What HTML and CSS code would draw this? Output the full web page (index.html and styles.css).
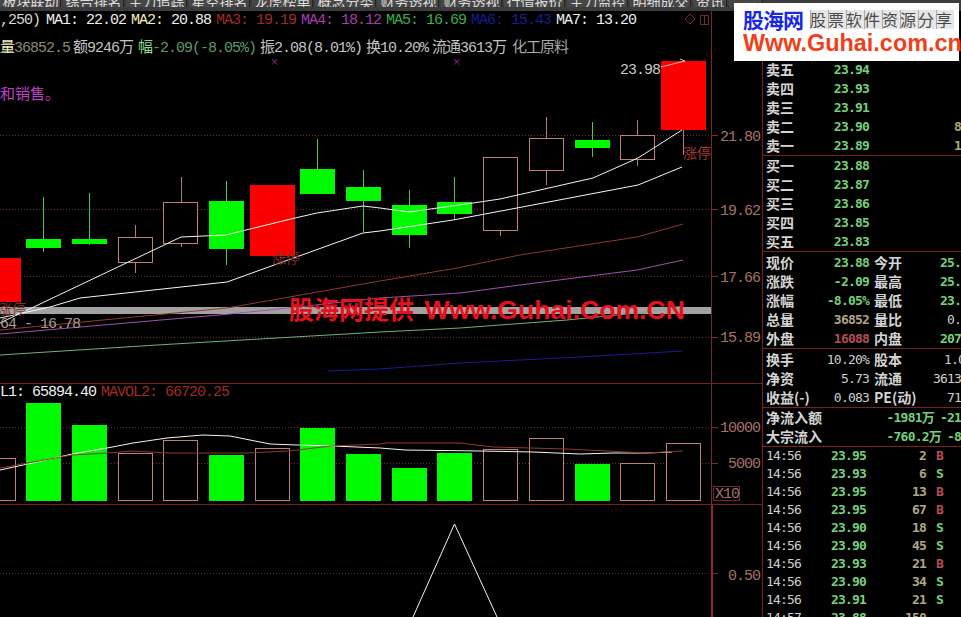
FILE: index.html
```html
<!DOCTYPE html>
<html lang="zh-CN">
  <head>
    <meta charset="UTF-8" />
    <meta name="viewport" content="width=device-width, initial-scale=1.0" />
    <title>股海网</title>
    <link rel="stylesheet" href="styles.css">
  </head>
  <body>
    <nav class="toolbar">
      <a class="tool">板块联动</a>
      <a class="tool">综合排名</a>
      <a class="tool">主力追踪</a>
      <a class="tool">星空排名</a>
      <a class="tool">龙虎榜单</a>
      <a class="tool">概念分类</a>
      <a class="tool">财务透视</a>
      <a class="tool">财务透视</a>
      <a class="tool">行情报价</a>
      <a class="tool">主力监控</a>
      <a class="tool">明细成交</a>
      <a class="tool tool-small">资讯</a>
      <a class="tool tool-small"></a>
    </nav>

    <div class="main">
      <section class="chart">
        <div class="pane pane-price">
          <svg class="plot" viewBox="0 11 762 372" width="762" height="372">
            <rect class="band" x="0" y="307" width="712" height="7" />
            <g class="grid">
              <line x1="0" y1="135.5" x2="712" y2="135.5" />
              <line x1="0" y1="209.5" x2="712" y2="209.5" />
              <line x1="0" y1="276.5" x2="712" y2="276.5" />
              <line x1="0" y1="337.5" x2="712" y2="337.5" />
            </g>
            <path class="axis" d="M711.5 11V383M712 135.5h6M712 209.5h6M712 276.5h6M712 337.5h6" />

            <path class="wick wick-down" d="M43.5 197V252M89.5 193V245M226.5 181V265M317.5 139V169M363.5 170V232M409.5 190V248M454.5 177V220M592.5 122V157" />
            <path class="wick wick-up" d="M135.5 225V237M135.5 262V273M181.5 177V202M181.5 243V247M500.5 230V236M546.5 117V138M546.5 170V185M637.5 120V135M637.5 159V166M683.5 130V155" />

            <rect class="limit" x="0" y="258" width="21" height="44" />
            <rect class="down" x="26" y="239" width="35" height="9" />
            <rect class="down" x="72" y="239" width="35" height="5" />
            <rect class="up" x="118.5" y="237.5" width="34" height="25" />
            <rect class="up" x="163.5" y="202.5" width="34" height="41" />
            <rect class="down" x="209" y="201" width="35" height="48" />
            <rect class="limit" x="250" y="185" width="45" height="71" />
            <rect class="down" x="300" y="169" width="35" height="25" />
            <rect class="down" x="346" y="187" width="35" height="14" />
            <rect class="down" x="392" y="205" width="35" height="30" />
            <rect class="down" x="437" y="202" width="35" height="12" />
            <rect class="up" x="483.5" y="157.5" width="34" height="73" />
            <rect class="up" x="529.5" y="138.5" width="34" height="32" />
            <rect class="down" x="575" y="140" width="35" height="8" />
            <rect class="up" x="620.5" y="135.5" width="34" height="24" />
            <rect class="limit" x="661" y="61" width="45" height="69" />

            <polyline class="ma ma-white" points="0,323 181,237 226,235 250,229 295,218 317,213 363,206 380,208 409,212 473,203 500,199 593,178 638,158 682,130" />
            <polyline class="ma ma-white" points="0,318 50,307 80,298 227,282 363,233 380,231 453,220 517,208 638,185 682,167" />
            <polyline class="ma ma-red" points="0,330 227,308 380,281 457,268 520,255 637,237 683,224" />
            <polyline class="ma ma-purple" points="0,334 230,314 288,308 380,298 460,293 520,285 637,270 683,260" />
            <polyline class="ma ma-green" points="0,355 157,345 380,332 460,328 567,320 647,312 683,306" />
            <polyline class="ma ma-blue" points="328,371 380,369 460,363 580,357 683,351" />

            <polyline class="peak-arrow" points="661,67 685,61 680,59" />
            <text class="mono price-tag" x="620" y="74">23.98</text>
            <text class="mono small-note" x="0" y="328">64 - 16.78</text>
            <text class="flag" x="683" y="158">涨停</text>
            <text class="flag flag-dim" x="272" y="263">涨停</text>
            <text class="flag flag-dim" x="-2" y="314">涨停</text>
            <text class="mark" x="270" y="65">×</text>
            <text class="mark" x="452" y="65">×</text>

            <path class="axis" d="M690 14l5 5-5 5-5-5zM700.5 15.5h8v9h-8zM704.5 15.5v9" />
            <text class="mono axis-label" x="720" y="141">21.80</text>
            <text class="mono axis-label" x="720" y="215">19.62</text>
            <text class="mono axis-label" x="720" y="282">17.66</text>
            <text class="mono axis-label" x="720" y="342">15.89</text>
          </svg>

          <div class="ma-row mono">
            <span class="ma-lead">,250)</span>
            <span class="ma-item c-white">MA1: 22.02</span>
            <span class="ma-item c-white"><b class="c-cream">MA2:</b> 20.88</span>
            <span class="ma-item c-red">MA3: 19.19</span>
            <span class="ma-item c-purple">MA4: 18.12</span>
            <span class="ma-item c-green">MA5: 16.69</span>
            <span class="ma-item c-blue">MA6: 15.43</span>
            <span class="ma-item c-white">MA7: 13.20</span>
          </div>
          <div class="quote-row mono">
            <span class="q-vol"><b class="c-cream">量</b>36852.5</span>
            <span class="c-light">额9246万</span>
            <span class="q-down"><b class="c-mint">幅</b>-2.09(-8.05%)</span>
            <span class="c-light">振2.08(8.01%)</span>
            <span class="c-light">换10.20%</span>
            <span class="c-light">流通3613万</span>
            <span class="q-sector">化工原料</span>
          </div>
          <p class="note">和销售。</p>
          <div class="watermark"><span class="wm-cn">股海网提供</span> Www.Guhai.Com.CN</div>
        </div>

        <div class="pane pane-vol">
          <svg class="plot" viewBox="0 384 762 120" width="762" height="120">
            <g class="grid">
              <line x1="0" y1="427.5" x2="712" y2="427.5" />
              <line x1="0" y1="463.5" x2="712" y2="463.5" />
            </g>
            <path class="axis" d="M711.5 384V504M712 427.5h6M712 463.5h6" />

            <rect class="up" x="-2.5" y="458.5" width="18" height="42" />
            <rect class="down" x="26" y="403" width="35" height="98" />
            <rect class="down" x="72" y="425" width="35" height="76" />
            <rect class="up" x="118.5" y="453.5" width="34" height="47" />
            <rect class="up" x="163.5" y="440.5" width="34" height="60" />
            <rect class="down" x="209" y="455" width="35" height="46" />
            <rect class="up" x="255.5" y="448.5" width="34" height="52" />
            <rect class="down" x="300" y="428" width="35" height="73" />
            <rect class="down" x="346" y="454" width="35" height="47" />
            <rect class="down" x="392" y="468" width="35" height="33" />
            <rect class="down" x="437" y="453" width="35" height="48" />
            <rect class="up" x="483.5" y="449.5" width="34" height="51" />
            <rect class="up" x="529.5" y="438.5" width="34" height="62" />
            <rect class="down" x="575" y="464" width="35" height="37" />
            <rect class="up" x="620.5" y="463.5" width="34" height="37" />
            <rect class="up" x="666.5" y="443.5" width="34" height="57" />

            <polyline class="ma ma-white" points="0,470 37,462 72,454 107,448 133,443 167,438 203,435 230,436 270,444 297,445 333,446 380,448 405,450 480,451 533,452 580,454 613,453 647,453 672,452" />
            <polyline class="ma ma-red" points="0,468 72,455 107,453 133,451 167,453 247,453 290,451 330,446 380,444 387,443 460,443 493,447 567,449 647,453 683,451" />

            <text class="mono axis-label" x="720" y="432">10000</text>
            <text class="mono axis-label" x="728" y="468">5000</text>
            <rect class="scale-box" x="713.5" y="486.5" width="26" height="14" />
            <text class="mono axis-label" x="715" y="498">X10</text>
          </svg>
          <div class="vol-row mono">
            <span class="c-white">L1: 65894.40</span>
            <span class="c-red">MAVOL2: 66720.25</span>
          </div>
        </div>

        <div class="pane pane-extra">
          <svg class="plot" viewBox="0 505 762 112" width="762" height="112">
            <line class="grid-line" x1="0" y1="573.5" x2="712" y2="573.5" />
            <path class="axis axis-strong" d="M712 505V617" />
            <path class="axis" d="M713 573.5h5" />
            <polyline class="ma ma-white" points="413,617 454.5,524 497,617" />
            <text class="mono axis-label" x="728" y="580">0.50</text>
          </svg>
        </div>
      </section>

      <aside class="panel">
        <div class="block block-asks">
          <div class="book-row"><span class="label">卖五</span><span class="num up-num">23.94</span><span></span></div>
          <div class="book-row"><span class="label">卖四</span><span class="num up-num">23.93</span><span></span></div>
          <div class="book-row"><span class="label">卖三</span><span class="num up-num">23.91</span><span></span></div>
          <div class="book-row"><span class="label">卖二</span><span class="num up-num">23.90</span><span class="num tan">8</span></div>
          <div class="book-row"><span class="label">卖一</span><span class="num up-num">23.89</span><span class="num tan">1</span></div>
        </div>
        <div class="block">
          <div class="book-row"><span class="label">买一</span><span class="num up-num">23.88</span><span></span></div>
          <div class="book-row"><span class="label">买二</span><span class="num up-num">23.87</span><span></span></div>
          <div class="book-row"><span class="label">买三</span><span class="num up-num">23.86</span><span></span></div>
          <div class="book-row"><span class="label">买四</span><span class="num up-num">23.85</span><span></span></div>
          <div class="book-row"><span class="label">买五</span><span class="num up-num">23.83</span><span></span></div>
        </div>
        <div class="block block-stats">
          <div class="stat-row"><span class="label">现价</span><span class="num up-num">23.88</span><span class="label">今开</span><span class="num up-num">25.</span></div>
          <div class="stat-row"><span class="label">涨跌</span><span class="num up-num">-2.09</span><span class="label">最高</span><span class="num up-num">25.</span></div>
          <div class="stat-row"><span class="label">涨幅</span><span class="num up-num">-8.05%</span><span class="label">最低</span><span class="num up-num">23.</span></div>
          <div class="stat-row"><span class="label">总量</span><span class="num tan">36852</span><span class="label">量比</span><span class="num pale">0.</span></div>
          <div class="stat-row"><span class="label">外盘</span><span class="num rose">16088</span><span class="label">内盘</span><span class="num up-num">207</span></div>
        </div>
        <div class="block block-stats">
          <div class="stat-row"><span class="label">换手</span><span class="num pale">10.20%</span><span class="label">股本</span><span class="num pale cut">1.00</span></div>
          <div class="stat-row"><span class="label">净资</span><span class="num pale">5.73</span><span class="label">流通</span><span class="num pale">3613</span></div>
          <div class="stat-row"><span class="label">收益(-)</span><span class="num pale">0.083</span><span class="label">PE(动)</span><span class="num pale">71</span></div>
        </div>
        <div class="block">
          <div class="flow-row"><span class="label">净流入额</span><span class="num up-num">-1981万</span><span class="num up-num">-21</span></div>
          <div class="flow-row"><span class="label">大宗流入</span><span class="num up-num">-760.2万</span><span class="num up-num">-8</span></div>
        </div>
        <div class="ticks">
          <div class="tick-row"><span class="num pale">14:56</span><span class="num up-num">23.95</span><span class="num tan">2</span><span class="num rose">B</span></div>
          <div class="tick-row"><span class="num pale">14:56</span><span class="num up-num">23.93</span><span class="num tan">6</span><span class="num up-num">S</span></div>
          <div class="tick-row"><span class="num pale">14:56</span><span class="num up-num">23.95</span><span class="num tan">13</span><span class="num rose">B</span></div>
          <div class="tick-row"><span class="num pale">14:56</span><span class="num up-num">23.95</span><span class="num tan">67</span><span class="num rose">B</span></div>
          <div class="tick-row"><span class="num pale">14:56</span><span class="num up-num">23.90</span><span class="num tan">18</span><span class="num up-num">S</span></div>
          <div class="tick-row"><span class="num pale">14:56</span><span class="num up-num">23.90</span><span class="num tan">45</span><span class="num up-num">S</span></div>
          <div class="tick-row"><span class="num pale">14:56</span><span class="num up-num">23.93</span><span class="num tan">21</span><span class="num rose">B</span></div>
          <div class="tick-row"><span class="num pale">14:56</span><span class="num up-num">23.90</span><span class="num tan">34</span><span class="num up-num">S</span></div>
          <div class="tick-row"><span class="num pale">14:56</span><span class="num up-num">23.91</span><span class="num tan">21</span><span class="num up-num">S</span></div>
          <div class="tick-row"><span class="num pale">14:57</span><span class="num up-num">23.88</span><span class="num tan">150</span><span></span></div>
        </div>
      </aside>
    </div>

    <div class="logo">
      <div class="logo-top">
        <span class="logo-brand">股海网</span>
        <span class="logo-tag">股票软件资源分享</span>
      </div>
      <div class="logo-url">Www.Guhai.com.cn</div>
    </div>
  </body>
</html>
```

FILE: styles.css
```css
/* page */
body {
  margin: 0;
  width: 961px;
  height: 617px;
  overflow: hidden;
  position: relative;
  background-color: #000;
  color: #ccc;
  font-family: "Noto Sans CJK SC", sans-serif;
}

.mono {
  font-family: "Liberation Mono", "Noto Sans CJK SC", monospace;
  font-size: 15px;
  letter-spacing: -1px;
}

b {
  font-weight: normal;
}

/* colours of the indicator text */
.c-white { color: #f0f0f0; }
.c-cream { color: #f4f0b8; }
.c-red { color: #a02c24; }
.c-purple { color: #a83cb0; }
.c-green { color: #3cae4c; }
.c-blue { color: #141e90; }
.c-light { color: #c4c4c4; }
.c-mint { color: #88dc88; }

/* top toolbar, its labels are cut by the window edge */
.toolbar {
  display: flex;
  gap: 2px;
  height: 11px;
  box-sizing: border-box;
  padding-bottom: 4px;
  background-color: #3c3c3c;
  overflow: hidden;
}
.tool {
  flex: 0 0 61px;
  height: 7px;
  overflow: hidden;
  background-color: #474747;
  color: #ddd;
  font-size: 14px;
  line-height: 3px;
  text-align: center;
  white-space: nowrap;
  box-shadow: inset -1px 0 0 #222;
}
.tool-small {
  flex-basis: 34px;
}

.main {
  display: flex;
  height: 606px;
}

/* left side: price, volume and extra indicator */
.chart {
  flex: 0 0 762px;
  display: flex;
  flex-direction: column;
}
.pane {
  position: relative;
  overflow: hidden;
  border-bottom: 1px solid #7a2222;
}
.pane-price { height: 372px; }
.pane-vol { height: 120px; }
.pane-extra {
  flex: 1;
  border-bottom: none;
}
.plot {
  position: absolute;
  left: 0;
  top: 0;
}

.ma-row {
  position: relative;
  display: flex;
  gap: 5px;
  height: 18px;
  margin-top: 1px;
  line-height: 18px;
  white-space: pre;
}
.ma-lead {
  width: 41px;
  color: #d8d8d8;
}
.quote-row {
  position: relative;
  display: flex;
  margin-top: 10px;
  height: 18px;
  line-height: 18px;
  white-space: pre;
}
.q-vol { width: 73px; color: #8f8a74; }
.quote-row .c-light:nth-child(2) { width: 65px; }
.q-down { width: 122px; color: #5f9a68; }
.quote-row .c-light:nth-child(4) { width: 106px; }
.quote-row .c-light:nth-child(5) { width: 66px; }
.quote-row .c-light:nth-child(6) { width: 80px; }
.q-sector { color: #a8a8a0; }

.note {
  position: relative;
  margin: 26px 0 0;
  font-size: 15px;
  line-height: 18px;
  color: #c040c8;
}

.vol-row {
  position: relative;
  display: flex;
  gap: 5px;
  height: 17px;
  line-height: 17px;
  white-space: pre;
}
.vol-row .c-white { width: 96px; }

.watermark {
  position: absolute;
  left: 289px;
  top: 282px;
  font-family: "Liberation Sans", "Noto Sans CJK SC", sans-serif;
  font-size: 26.6px;
  font-weight: bold;
  line-height: 34px;
  color: #e8101c;
  white-space: nowrap;
}
.wm-cn {
  margin-right: 3px;
  font-size: 25px;
}

/* svg marks */
.band { fill: #a2a2a2; }
.grid line,
.grid-line {
  stroke: #6e2c2c;
  stroke-width: 1;
  stroke-dasharray: 1 2;
}
.axis {
  fill: none;
  stroke: #7a2a2a;
  stroke-width: 1;
}
.axis-strong {
  stroke: #902828;
  stroke-width: 2;
}
.wick {
  fill: none;
  stroke-width: 1;
}
.wick-down { stroke: #48cc48; }
.wick-up { stroke: #b47c74; }
.up {
  fill: #000;
  stroke: #c08078;
  stroke-width: 1;
}
.down { fill: #00fa00; }
.limit { fill: #fa0000; }

.ma {
  fill: none;
  stroke-width: 1;
}
.ma-white { stroke: #f4f4f4; }
.ma-red { stroke: #8e3a30; }
.ma-purple { stroke: #a050b0; }
.ma-green { stroke: #70b078; }
.ma-blue { stroke: #1c1c98; }

.peak-arrow {
  fill: none;
  stroke: #e0b8b8;
  stroke-width: 1;
}
.scale-box {
  fill: none;
  stroke: #6e2c2c;
}

svg .mono { fill: #a87068; }
svg .price-tag { fill: #c8c8c8; }
svg .small-note { fill: #b09898; }
.flag {
  font-size: 14px;
  fill: #a8382c;
}
.flag-dim { fill: #843028; }
.mark {
  font-size: 9px;
  fill: #a040b0;
}

/* right side: order book and ticks */
.panel {
  flex: 0 0 199px;
  box-sizing: border-box;
  padding-top: 49px;
  border-left: 1px solid #7a2222;
  font-family: "DejaVu Sans Mono", "Noto Sans CJK SC", monospace;
  font-size: 13px;
  letter-spacing: -0.8px;
  overflow: hidden;
}
.block {
  border-bottom: 1px solid #7a2222;
}
.block-stats {
  padding-top: 1px;
}

.book-row,
.stat-row,
.flow-row {
  display: grid;
  align-items: center;
  height: 19px;
  padding-left: 3px;
  line-height: 19px;
  white-space: nowrap;
}
.book-row {
  grid-template-columns: 28px 75px 1fr;
}
.stat-row {
  grid-template-columns: 28px 75px 5px 28px 1fr;
}
.stat-row .label:nth-child(3) {
  grid-column: 4;
}
.flow-row {
  grid-template-columns: auto 1fr auto;
  column-gap: 6px;
}
.book-row .num,
.stat-row .num,
.flow-row .num {
  text-align: right;
}
.tick-row {
  display: grid;
  grid-template-columns: 65px 35px 60px 10px 8px;
  height: 18px;
  padding-left: 3px;
  line-height: 18px;
  white-space: nowrap;
}
.tick-row .num:nth-child(3) {
  text-align: right;
}
.tick-row .num:nth-child(4) {
  grid-column: 5;
}

.label {
  font-family: "Noto Sans CJK SC", sans-serif;
  font-size: 14px;
  font-weight: bold;
  letter-spacing: 0;
  color: #d4d4d4;
}
.num { font-weight: bold; }
.up-num { color: #74d07c; }
.tan { color: #b0a684; }
.pale { color: #cfcfcf; font-weight: normal; }
.rose { color: #b84c58; }
.cut { margin-right: -11px; }

/* site logo pasted over the corner */
.logo {
  position: absolute;
  left: 734px;
  top: 3px;
  width: 225px;
  height: 58px;
  box-sizing: border-box;
  padding: 5px 0 0 9px;
  background-color: #fff;
}
.logo-top {
  display: flex;
  align-items: center;
  gap: 7px;
}
.logo-brand {
  font-size: 21px;
  font-weight: bold;
  line-height: 22px;
  letter-spacing: -1px;
  color: #1a28e4;
}
.logo-tag {
  width: 144px;
  font-size: 16px;
  line-height: 19px;
  letter-spacing: 2px;
  color: #4a4a4a;
  background-color: #e6e6e6;
  background-image: repeating-linear-gradient(90deg, #aaa 0 1px, transparent 1px 18px);
  white-space: nowrap;
}
.logo-url {
  font-family: "Liberation Sans", sans-serif;
  font-size: 23.4px;
  font-weight: bold;
  line-height: 26px;
  white-space: nowrap;
  color: #f0401a;
}
```
